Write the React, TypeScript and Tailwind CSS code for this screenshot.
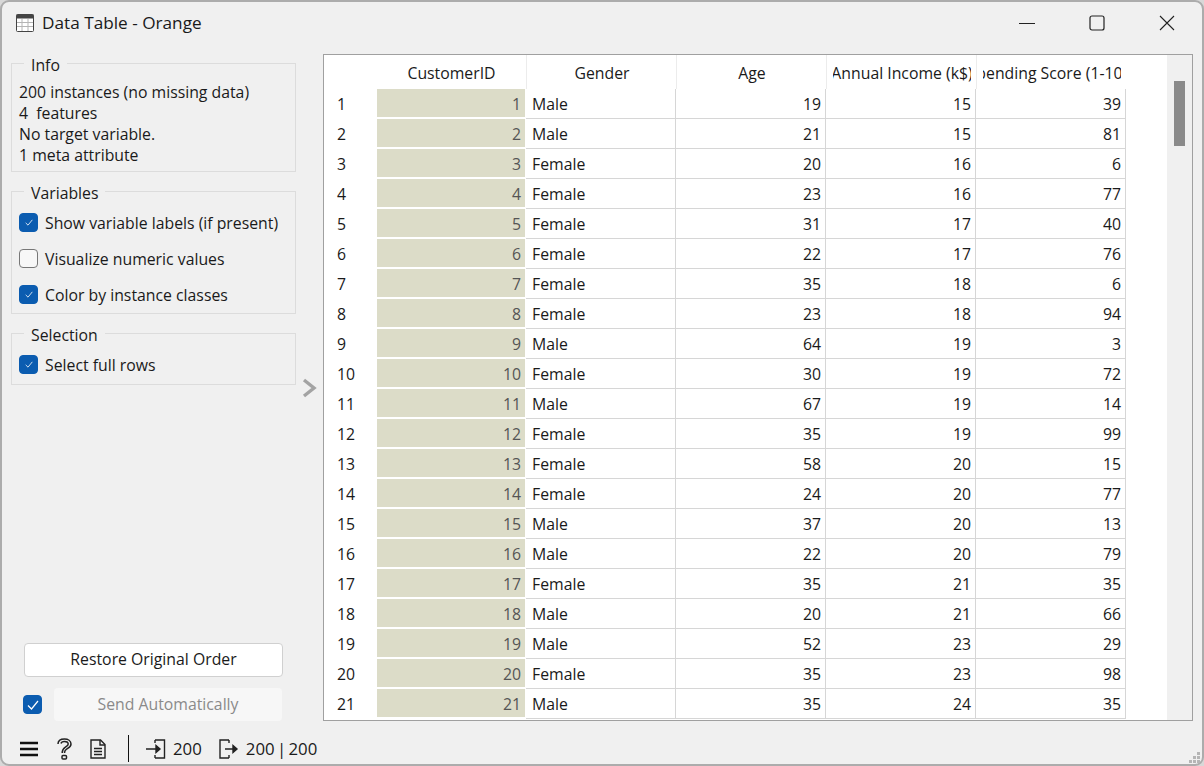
import React from "react";

const rows: [number, string, number, number, number][] = [
  [1, "Male", 19, 15, 39],
  [2, "Male", 21, 15, 81],
  [3, "Female", 20, 16, 6],
  [4, "Female", 23, 16, 77],
  [5, "Female", 31, 17, 40],
  [6, "Female", 22, 17, 76],
  [7, "Female", 35, 18, 6],
  [8, "Female", 23, 18, 94],
  [9, "Male", 64, 19, 3],
  [10, "Female", 30, 19, 72],
  [11, "Male", 67, 19, 14],
  [12, "Female", 35, 19, 99],
  [13, "Female", 58, 20, 15],
  [14, "Female", 24, 20, 77],
  [15, "Male", 37, 20, 13],
  [16, "Male", 22, 20, 79],
  [17, "Female", 35, 21, 35],
  [18, "Male", 20, 21, 66],
  [19, "Male", 52, 23, 29],
  [20, "Female", 35, 23, 98],
  [21, "Male", 35, 24, 35],
];

const headers = ["CustomerID", "Gender", "Age", "Annual Income (k$)", "Spending Score (1-100)"];

const Check = ({ checked = true, big = false }: { checked?: boolean; big?: boolean }) => (
  <span
    className={`flex h-[19px] w-[19px] shrink-0 items-center justify-center rounded-[4px] border ${
      checked ? "border-[#0b5cb0] bg-[#0b5cb0]" : "border-[#777777] bg-[#f7f7f7]"
    }`}
  >
    {checked && (
      <svg width={big ? 12 : 8} height={big ? 10 : 7} viewBox="0 0 12 10" fill="none" stroke="#ffffff" strokeWidth="1.2">
        <path d="M1 5.5 L4.5 9 L11 1" />
      </svg>
    )}
  </span>
);

const Group = ({ title, className, children }: { title: string; className: string; children: React.ReactNode }) => (
  <fieldset className={`border border-[#dcdcdc] pl-[7px] ${className}`}>
    <legend className="ml-[5px] px-[7px] leading-[20px]">
      <span className="block translate-y-[2px]">{title}</span>
    </legend>
    {children}
  </fieldset>
);

const CheckRow = ({ label, checked = true }: { label: string; checked?: boolean }) => (
  <div className="flex h-[36px] items-center gap-[7px]">
    <Check checked={checked} />
    <span className="pt-[3px]">{label}</span>
  </div>
);

export default function App() {
  return (
    <div className="h-[766px] w-[1204px] overflow-hidden bg-[#d8d8d8] font-['Open_Sans','Noto_Sans',sans-serif] text-[15.8px] text-[#1a1a1a]">
      <div className="relative flex h-full flex-col rounded-[9px] border-2 border-[#acacac] bg-[#f0f0f0]">
        {/* title bar */}
        <div className="flex h-[43px] shrink-0 items-center pb-[2px] pl-[14px]">
          <svg width="18" height="18" viewBox="0 0 18 18" fill="none">
            <rect x="0.5" y="0.5" width="17" height="17" rx="1" fill="#ffffff" stroke="#444444" />
            <rect x="0.5" y="0.5" width="17" height="4" fill="#444444" />
            <path d="M1 8.5H17M1 12.5H17M6 5V17M12 5V17" stroke="#b5b5b5" />
          </svg>
          <span className="ml-[8px] text-[17.2px]">Data Table - Orange</span>
          <div className="ml-auto flex items-center">
            <div className="flex w-[70px] justify-center">
              <svg width="16" height="16" viewBox="0 0 16 16" stroke="#222222" fill="none">
                <path d="M0 8.5H16" />
              </svg>
            </div>
            <div className="flex w-[70px] justify-center">
              <svg width="16" height="16" viewBox="0 0 16 16" stroke="#222222" fill="none" strokeWidth="1.2">
                <rect x="1" y="1" width="14" height="14" rx="2" />
              </svg>
            </div>
            <div className="flex w-[70px] justify-center">
              <svg width="16" height="16" viewBox="0 0 16 16" stroke="#222222" fill="none" strokeWidth="1.1">
                <path d="M1 1L15 15M15 1L1 15" />
              </svg>
            </div>
          </div>
        </div>

        {/* content */}
        <div className="flex min-h-0 flex-1 pl-[9px] pr-[9px]">
          <div className="flex w-[285px] shrink-0 flex-col pt-[8px]">
            <Group title="Info" className="h-[119px] pb-[5px] leading-[21px]">
              <div className="mt-[9px]">200 instances (no missing data)</div>
              <div className="whitespace-pre">4  features</div>
              <div>No target variable.</div>
              <div>1 meta attribute</div>
            </Group>
            <Group title="Variables" className="mt-[9px] h-[133px]">
              <div className="mt-[3px]">
                <CheckRow label="Show variable labels (if present)" />
                <CheckRow label="Visualize numeric values" checked={false} />
                <CheckRow label="Color by instance classes" />
              </div>
            </Group>
            <Group title="Selection" className="mt-[9px] h-[62px]">
              <div className="mt-[3px]">
                <CheckRow label="Select full rows" />
              </div>
            </Group>

            <div className="mt-auto">
              <button className="ml-[13px] block h-[34px] w-[259px] rounded-[4px] border border-[#d0d0d0] bg-white text-[#1a1a1a]">
                Restore Original Order
              </button>
              <div className="mt-[11px] flex items-center pl-[12px]">
                <Check big />
                <button className="ml-[12px] h-[33px] w-[228px] rounded-[4px] bg-[#f7f7f7] text-[#8a8a8a]">
                  Send Automatically
                </button>
              </div>
            </div>
          </div>

          <div className="flex w-[27px] shrink-0 justify-center pt-[333px]">
            <svg width="15" height="20" viewBox="0 0 15 20" fill="none" stroke="#a3a3a3" strokeWidth="3.4">
              <path d="M2 2L12 10L2 18" />
            </svg>
          </div>

          {/* table */}
          <div className="mt-[9px] flex min-w-0 flex-1 overflow-hidden border border-[#a0a0a0] bg-white">
            <div className="w-[843px] shrink-0">
              <div className="flex h-[34px] pl-[52px]">
                {headers.map((h) => (
                  <div key={h} className="flex w-[150px] shrink-0 justify-center border-l border-[#ececec] pl-[1px] leading-[36px] first:border-l-0">
                    <div className="mx-[5px] flex min-w-0 flex-1 justify-center overflow-hidden whitespace-nowrap">{h}</div>
                  </div>
                ))}
              </div>
              {rows.map(([id, gender, age, income, score]) => (
                <div key={id} className="flex h-[30px] leading-[31px]">
                  <div className="w-[53px] shrink-0 pl-[13px]">{id}</div>
                  <div className="w-[149px] shrink-0 border-b-2 border-r border-white bg-[#dcdcc8] pr-[4px] text-right text-[#555555]">{id}</div>
                  <div className="w-[150px] shrink-0 border-b border-r border-[#d6d6d6] pl-[6px]">{gender}</div>
                  <div className="w-[150px] shrink-0 border-b border-r border-[#d6d6d6] pr-[4px] text-right">{age}</div>
                  <div className="w-[150px] shrink-0 border-b border-r border-[#d6d6d6] pr-[4px] text-right">{income}</div>
                  <div className="w-[150px] shrink-0 border-b border-r border-[#d6d6d6] pr-[4px] text-right">{score}</div>
                </div>
              ))}
            </div>
            <div className="ml-auto h-full w-[26px] shrink-0 bg-[#f0f0f0] pl-[7px] pt-[26px]">
              <div className="h-[65px] w-[11px] bg-[#8a8a8a]" />
            </div>
          </div>
        </div>

        {/* status bar */}
        <div className="flex h-[43px] shrink-0 items-center pl-[18px] pt-[12px] text-[16.8px] [word-spacing:-2px]">
          <svg width="18" height="16" viewBox="0 0 18 16" stroke="#111111" strokeWidth="2.4">
            <path d="M0 2H18M0 8H18M0 14H18" />
          </svg>
          <svg className="ml-[19px]" width="15" height="22" viewBox="0 0 15 22" fill="none" stroke="#222222" strokeWidth="1.5">
            <path d="M1 6C1 2.5 4 1 7.5 1S14 2.8 14 6C14 9 11.5 9.8 9.5 11.2C8 12.2 7.5 13 7.5 15" />
            <path d="M4 5.5C4.3 4 5.7 3.4 7.5 3.4S11.2 4.4 11.2 6C11.2 7.6 9.6 8.2 8 9.4C6 10.8 5.2 12 5.2 15" />
            <rect x="5" y="17.5" width="4.5" height="3.5" rx="1" />
          </svg>
          <svg className="ml-[18px]" width="16" height="20" viewBox="0 0 16 20" fill="none" stroke="#222222" strokeWidth="1.4">
            <path d="M1 1H10.5L15 5.5V19H1Z" />
            <path d="M10 1V6H15M4 9.5H12M4 12.5H12M4 15.5H12" />
          </svg>
          <div className="ml-[22px] h-[27px] w-px bg-[#111111]" />
          <svg className="ml-[17px]" width="20" height="20" viewBox="0 0 20 20" fill="none" stroke="#222222" strokeWidth="1.4">
            <path d="M9 1H18.5V19H9M9 1V4M9 19V16M0 10H11" />
            <path d="M10 6.5L14 10L10 13.5Z" fill="#222222" />
          </svg>
          <span className="ml-[7px]">200</span>
          <svg className="ml-[17px]" width="20" height="20" viewBox="0 0 20 20" fill="none" stroke="#222222" strokeWidth="1.4">
            <path d="M10 1H1V19H10M10 1V4M10 19V16M6 10H15" />
            <path d="M14 6.5L18 10L14 13.5Z" fill="#222222" />
          </svg>
          <span className="ml-[7px]">200 | 200</span>
        </div>

        {/* size grip */}
        <svg className="absolute bottom-0 right-0" width="14" height="12" viewBox="0 0 14 12" fill="#b5b5b5">
          <rect x="9" y="0" width="3" height="3" />
          <rect x="5" y="4" width="3" height="3" />
          <rect x="9" y="4" width="3" height="3" />
          <rect x="1" y="8" width="3" height="3" />
          <rect x="5" y="8" width="3" height="3" />
          <rect x="9" y="8" width="3" height="3" />
        </svg>
      </div>
    </div>
  );
}
